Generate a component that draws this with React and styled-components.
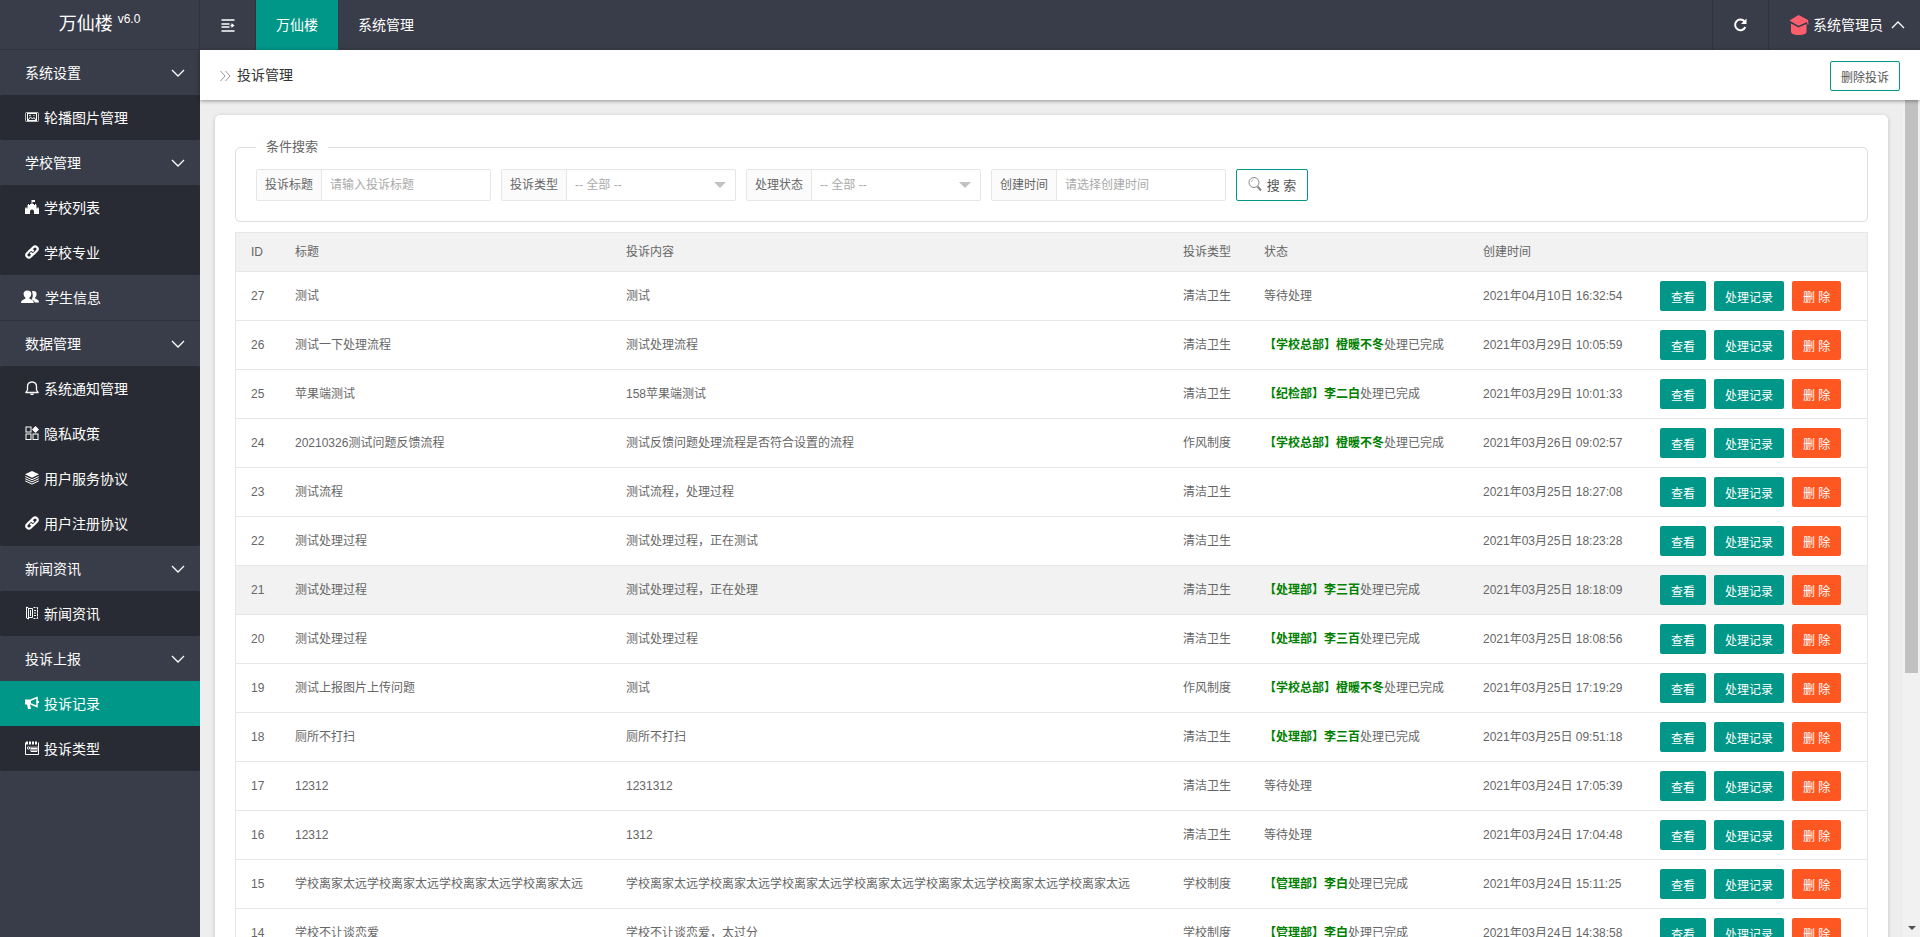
import React from 'react'
import styled, { createGlobalStyle, css } from 'styled-components'

const menu = [
  { label: '系统设置', children: [{ label: '轮播图片管理', icon: 'picture' }] },
  {
    label: '学校管理',
    children: [
      { label: '学校列表', icon: 'castle' },
      { label: '学校专业', icon: 'link' },
    ],
  },
  { label: '学生信息', icon: 'users' },
  {
    label: '数据管理',
    children: [
      { label: '系统通知管理', icon: 'bell' },
      { label: '隐私政策', icon: 'apps' },
      { label: '用户服务协议', icon: 'layers' },
      { label: '用户注册协议', icon: 'link' },
    ],
  },
  { label: '新闻资讯', children: [{ label: '新闻资讯', icon: 'news' }] },
  {
    label: '投诉上报',
    children: [
      { label: '投诉记录', icon: 'horn', active: true },
      { label: '投诉类型', icon: 'calendar' },
    ],
  },
]

const far = '学校离家太远'

const rows = [
  { id: 27, title: '测试', content: '测试', type: '清洁卫生', status: '等待处理', time: '2021年04月10日 16:32:54' },
  { id: 26, title: '测试一下处理流程', content: '测试处理流程', type: '清洁卫生', who: '【学校总部】橙暖不冬', status: '处理已完成', time: '2021年03月29日 10:05:59' },
  { id: 25, title: '苹果端测试', content: '158苹果端测试', type: '清洁卫生', who: '【纪检部】李二白', status: '处理已完成', time: '2021年03月29日 10:01:33' },
  { id: 24, title: '20210326测试问题反馈流程', content: '测试反馈问题处理流程是否符合设置的流程', type: '作风制度', who: '【学校总部】橙暖不冬', status: '处理已完成', time: '2021年03月26日 09:02:57' },
  { id: 23, title: '测试流程', content: '测试流程，处理过程', type: '清洁卫生', time: '2021年03月25日 18:27:08' },
  { id: 22, title: '测试处理过程', content: '测试处理过程，正在测试', type: '清洁卫生', time: '2021年03月25日 18:23:28' },
  { id: 21, title: '测试处理过程', content: '测试处理过程，正在处理', type: '清洁卫生', who: '【处理部】李三百', status: '处理已完成', time: '2021年03月25日 18:18:09', hover: true },
  { id: 20, title: '测试处理过程', content: '测试处理过程', type: '清洁卫生', who: '【处理部】李三百', status: '处理已完成', time: '2021年03月25日 18:08:56' },
  { id: 19, title: '测试上报图片上传问题', content: '测试', type: '作风制度', who: '【学校总部】橙暖不冬', status: '处理已完成', time: '2021年03月25日 17:19:29' },
  { id: 18, title: '厕所不打扫', content: '厕所不打扫', type: '清洁卫生', who: '【处理部】李三百', status: '处理已完成', time: '2021年03月25日 09:51:18' },
  { id: 17, title: '12312', content: '1231312', type: '清洁卫生', status: '等待处理', time: '2021年03月24日 17:05:39' },
  { id: 16, title: '12312', content: '1312', type: '清洁卫生', status: '等待处理', time: '2021年03月24日 17:04:48' },
  { id: 15, title: far.repeat(4), content: far.repeat(7), type: '学校制度', who: '【管理部】李白', status: '处理已完成', time: '2021年03月24日 15:11:25' },
  { id: 14, title: '学校不让谈恋爱', content: '学校不让谈恋爱，太过分', type: '学校制度', who: '【管理部】李白', status: '处理已完成', time: '2021年03月24日 14:38:58' },
]

const icons = {
  picture: (
    <g fill="none" stroke="currentColor">
      <rect x="0.5" y="2.5" width="13" height="9" rx="1" opacity="0.7" />
      <rect x="2.5" y="3.5" width="9" height="7" />
      <path d="M3 10l2.5-3 2 2 1.5-1.5 2 2.5" />
      <circle cx="5" cy="5.5" r="0.5" />
      <path d="M8.5 5.5h1" />
    </g>
  ),
  castle: (
    <path
      fill="currentColor"
      d="M6.500 0H10v2H7.500v2H9v1h1V4h1v1h.5v3.500H12v-1h.7v1h.6v-1h.7V14H9v-2.500a2 2 0 0 0-4 0V14H0V7.500h.7v1h.6v-1H2v1h.5V5H3V4h1v1h1V4h1.500z"
    />
  ),
  link: (
    <g fill="none" stroke="currentColor" strokeWidth="2.200" strokeLinecap="round">
      <path d="M6.200 4.300L8.300 2.200a2.500 2.500 0 0 1 3.600 3.600L9.500 8.200a2.500 2.500 0 0 1-3.500 0" />
      <path d="M7.800 9.700L5.700 11.800a2.500 2.500 0 0 1-3.600-3.600L4.500 5.800a2.500 2.500 0 0 1 3.500 0" />
    </g>
  ),
  users: (
    <g fill="currentColor">
      <path d="M9.500 1c2 0 2.600 1.200 2.600 2.900S11.500 6.800 11 7.400v1c1 .8 3 1.200 3 4.100h-3.200c-.3-1.700-1.600-2.500-2.600-3C9 8.500 9.400 6 9 3.500 8.800 2.300 8.500 1.300 8.500 1.200z" />
      <path d="M5 .5c2 0 3 1.300 3 3.200S7.200 6.900 6.600 7.500v1.300c1.200.8 3.400 1.200 3.400 4.200H0C0 10 2.200 9.600 3.400 8.800V7.500C2.800 6.900 2 5.600 2 3.700S3 .5 5 .5z" />
    </g>
  ),
  bell: (
    <g fill="none" stroke="currentColor" strokeWidth="1.300" strokeLinejoin="round">
      <path d="M7 1C4 1 2.500 3 2.500 5.500V9L.8 11.500h12.400L11.500 9V5.500C11.500 3 10 1 7 1z" />
      <path d="M5.500 12.500c.5 1.300 2.500 1.300 3 0" />
    </g>
  ),
  apps: (
    <g fill="none" stroke="currentColor">
      <rect x="1" y="1" width="5" height="5" />
      <rect x="1" y="8" width="5" height="5.500" />
      <rect x="8" y="8" width="5" height="5.500" />
      <path d="M10.500 0l3.500 3.500L10.500 7 7 3.500z" fill="currentColor" stroke="none" />
    </g>
  ),
  layers: (
    <g fill="none" stroke="currentColor">
      <path d="M7 0l7 3.300-7 3.400-7-3.400z" fill="currentColor" stroke="none" />
      <path d="M.2 5.500L7 8.700l6.800-3.200M.2 7.700L7 10.900l6.800-3.200M.2 9.900L7 13.100l6.800-3.200" />
    </g>
  ),
  news: (
    <g fill="none" stroke="currentColor">
      <path d="M1.500 1v11l2 1V2zM3.500 2.500h4v9h-4M5.500 4v6" />
      <path d="M8.500 1.500h4M9 4.500h4M9 7h4M9 9.500h4M8.500 12.500h4" strokeDasharray="2 1" />
      <path d="M12.500 1.500v11" strokeDasharray="2 1" />
    </g>
  ),
  horn: (
    <g fill="none" stroke="currentColor">
      <path d="M0 3.500h6v5H5l1 4.500H3L2 8.500H0z" fill="currentColor" stroke="none" />
      <path d="M6 4l6-2.500v9L6 8" strokeWidth="1.500" />
      <path d="M13 5v2" strokeWidth="2" />
    </g>
  ),
  calendar: (
    <g fill="none" stroke="currentColor">
      <path d="M.5 1.500v12h13v-12" />
      <path d="M1 2h12" strokeWidth="3" strokeDasharray="2 1" />
      <path d="M5 5.500h8v5H5z" fill="currentColor" fillOpacity="0.5" stroke="none" />
      <circle cx="3.500" cy="7" r="1.200" />
      <path d="M6 7.500h6M6 10.500h6" />
    </g>
  ),
}

function Chevron({ up }) {
  return (
    <svg width="14" height="14" viewBox="0 0 14 14" fill="none" stroke="currentColor" strokeWidth="1.3">
      <path d={up ? 'M1 10l6-6 6 6' : 'M1 5l6 6 6-6'} />
    </svg>
  )
}

function MenuIcon({ name }) {
  const size = name === 'users' ? 18 : 14
  return (
    <svg width={size} height="14" viewBox="0 0 14 14" preserveAspectRatio="none" aria-hidden="true">
      {icons[name]}
    </svg>
  )
}

function Sidebar() {
  return (
    <Side>
      <Logo href="#">
        万仙楼<sup>v6.0</sup>
      </Logo>
      <nav>
        {menu.map((group) => (
          <div key={group.label}>
            {group.children ? (
              <MenuLink href="#">
                <span>{group.label}</span>
                <Chevron />
              </MenuLink>
            ) : (
              <SingleLink href="#">
                <MenuIcon name={group.icon} />
                {group.label}
              </SingleLink>
            )}
            {group.children && (
              <SubMenu>
                {group.children.map((item) => (
                  <SubLink href="#" key={item.label} $active={item.active}>
                    <MenuIcon name={item.icon} />
                    {item.label}
                  </SubLink>
                ))}
              </SubMenu>
            )}
          </div>
        ))}
      </nav>
    </Side>
  )
}

function TopBar() {
  return (
    <Top>
      <ToggleButton aria-label="menu">
        <svg width="14" height="14" viewBox="0 0 14 14" fill="none" stroke="currentColor" strokeWidth="1.5">
          <path d="M0.500 2h13M0.500 6h8M0.500 9h8M0.500 13h13" />
          <path d="M9.500 7.500h2" />
          <path d="M10.500 5L13.500 7.500l-3 2.500z" fill="currentColor" stroke="none" />
        </svg>
      </ToggleButton>
      <TopLink href="#" $active>万仙楼</TopLink>
      <TopLink href="#">系统管理</TopLink>
      <Spacer />
      <RefreshButton aria-label="refresh">
        <svg width="14" height="14" viewBox="0 0 14 14" fill="none" stroke="currentColor" strokeWidth="2">
          <path d="M11.500 3.500A5.300 5.300 0 1 0 12.300 9" />
          <path d="M13.500 0.500v5.500H8z" fill="currentColor" stroke="none" />
        </svg>
      </RefreshButton>
      <UserLink href="#">
        <svg width="20" height="20" viewBox="0 0 20 20" fill="#ff5f6d">
          <path d="M9.500 0L19 5l.5 4.500h-1L18 7l-8.500 3.700L.5 5.500z" />
          <path d="M2 8.500l7.500 4 8-3.500v7.500c0 2.500-3 3.500-7.700 3.500S2 19 2 16.500z" />
        </svg>
        <span>系统管理员</span>
        <Chevron up />
      </UserLink>
    </Top>
  )
}

function SearchForm() {
  return (
    <Fieldset>
      <legend>条件搜索</legend>
      <Form onSubmit={(e) => e.preventDefault()}>
        <Field>
          <label htmlFor="title">投诉标题</label>
          <input id="title" placeholder="请输入投诉标题" />
        </Field>
        <Field>
          <label htmlFor="type">投诉类型</label>
          <SelectBox>
            <select id="type">
              <option>-- 全部 --</option>
            </select>
          </SelectBox>
        </Field>
        <Field>
          <label htmlFor="status">处理状态</label>
          <SelectBox>
            <select id="status">
              <option>-- 全部 --</option>
            </select>
          </SelectBox>
        </Field>
        <Field>
          <label htmlFor="time">创建时间</label>
          <input id="time" placeholder="请选择创建时间" />
        </Field>
        <SearchButton>
          <svg width="14" height="16" viewBox="0 0 14 16" fill="none" stroke="#888">
            <circle cx="6" cy="6.500" r="5" />
            <path d="M3.500 6a2.500 2.500 0 0 1 2-2.200" opacity="0.6" />
            <path d="M9.500 10.500l3.500 4" strokeWidth="2" />
          </svg>
          搜 索
        </SearchButton>
      </Form>
    </Fieldset>
  )
}

function ComplaintTable() {
  return (
    <Table>
      <colgroup>
        <Col $w={44} />
        <Col $w={331} />
        <Col />
        <Col $w={81} />
        <Col $w={219} />
        <Col $w={177} />
        <Col $w={222} />
      </colgroup>
      <thead>
        <tr>
          <th>ID</th>
          <th>标题</th>
          <th>投诉内容</th>
          <th>投诉类型</th>
          <th>状态</th>
          <th>创建时间</th>
          <th></th>
        </tr>
      </thead>
      <tbody>
        {rows.map((row) => (
          <Row key={row.id} $hover={row.hover}>
            <td>{row.id}</td>
            <td>{row.title}</td>
            <td>{row.content}</td>
            <td>{row.type}</td>
            <td>
              {row.who && <Handler>{row.who}</Handler>}
              {row.status}
            </td>
            <td>{row.time}</td>
            <td>
              <Actions>
                <ActionButton>查看</ActionButton>
                <ActionButton>处理记录</ActionButton>
                <ActionButton $danger>删 除</ActionButton>
              </Actions>
            </td>
          </Row>
        ))}
      </tbody>
    </Table>
  )
}

function App() {
  return (
    <Page>
      <GlobalStyle />
      <Sidebar />
      <Main>
        <TopBar />
        <PageHeader>
          <svg width="11" height="12" viewBox="0 0 11 12" fill="none" stroke="#999">
            <path d="M0.500 1l4.500 5-4.500 5M5.500 1l4.500 5-4.500 5" />
          </svg>
          <h1>投诉管理</h1>
          <Spacer />
          <OutlineButton>删除投诉</OutlineButton>
        </PageHeader>
        <Body>
          <Content>
            <Card>
              <SearchForm />
              <ComplaintTable />
            </Card>
          </Content>
          <ScrollTrack>
            <ScrollThumb />
            <ScrollArrow />
          </ScrollTrack>
        </Body>
      </Main>
    </Page>
  )
}

export default App

const GlobalStyle = createGlobalStyle`
*{
    box-sizing: border-box;
}
body{
    margin: 0;
    overflow: hidden;
    font-size: 12px;
    color: #666;
}
body, button, input, select{
    font-family: "Liberation Sans", "Noto Sans CJK SC", sans-serif;
}
a{
    text-decoration: none;
    color: #fff;
}
button{
    cursor: pointer;
    padding: 0;
    border: none;
}
`;

const Page = styled.div`
display: flex;
height: 100vh;
`;

const Side = styled.aside`
width: 200px;
flex-shrink: 0;
background-color: #393D49;
font-size: 14px;
`;

const Logo = styled.a`
display: flex;
justify-content: center;
height: 50px;
line-height: 49px;
font-size: 18px;
border-right: 1px solid #30333d;
border-bottom: 1px solid #30333d;
sup{
    font-size: 12px;
    line-height: 39px;
    margin-left: 5px;
}
`;

const itemStyle = css`
display: flex;
align-items: center;
height: 45px;
padding: 0 15px 2px 25px;
svg{
    flex-shrink: 0;
}
`;

const MenuLink = styled.a`
${itemStyle}
justify-content: space-between;
`;

const SingleLink = styled.a`
${itemStyle}
height: 46px;
padding-left: 21px;
gap: 6px;
border-bottom: 1px solid #30333d;
`;

const SubMenu = styled.div`
background-color: #282B33;
border-radius: 2px;
`;

const SubLink = styled.a`
${itemStyle}
gap: 5px;
background-color: ${(props) => (props.$active ? '#009688' : 'transparent')};
`;

const Main = styled.main`
flex: 1;
min-width: 0;
display: flex;
flex-direction: column;
`;

const Top = styled.header`
display: flex;
flex-shrink: 0;
height: 50px;
background-color: #393D49;
color: #fff;
font-size: 14px;
`;

const ToggleButton = styled.button`
width: 56px;
display: flex;
align-items: center;
justify-content: center;
background: none;
color: #fff;
border-right: 1px solid #30333d;
`;

const TopLink = styled.a`
padding: 0 20px;
line-height: 50px;
background-color: ${(props) => (props.$active ? '#009688' : 'transparent')};
`;

const Spacer = styled.div`
flex: 1;
`;

const RefreshButton = styled(ToggleButton)`
border-left: 1px solid #30333d;
width: 57px;
padding-right: 1px;
`;

const UserLink = styled.a`
display: flex;
align-items: center;
padding: 0 15px 0 20px;
span{
    margin: 0 8px 0 4px;
    padding-bottom: 2px;
}
`;

const PageHeader = styled.div`
position: relative;
z-index: 1;
display: flex;
align-items: center;
flex-shrink: 0;
height: 50px;
padding: 2px 20px 0;
background-color: #fff;
box-shadow: 0 1px 4px rgba(0, 0, 0, 0.4);
h1{
    margin: 0 0 0 6px;
    padding-bottom: 4px;
    font-size: 14px;
    font-weight: 400;
    color: #333;
}
`;

const OutlineButton = styled.button`
width: 70px;
height: 30px;
font-size: 12px;
color: #555;
background-color: #fff;
border: 1px solid #009688;
border-radius: 2px;
`;

const Body = styled.div`
flex: 1;
min-height: 0;
display: flex;
background-color: #eee;
`;

const Content = styled.div`
flex: 1;
min-width: 0;
padding: 15px;
overflow: hidden;
`;

const Card = styled.section`
padding: 20px;
background-color: #fff;
border-radius: 5px;
box-shadow: 0 1px 4px rgba(0, 0, 0, 0.2);
`;

const Fieldset = styled.fieldset`
margin: 0 0 10px;
padding: 10px 20px 20px;
border: 1px solid #ddd;
border-radius: 5px;
legend{
    padding: 0 10px;
    font-size: 13px;
    line-height: 24px;
}
`;

const Form = styled.form`
display: flex;
gap: 10px;
`;

const Field = styled.div`
display: flex;
width: 235px;
height: 32px;
border: 1px solid #e6e6e6;
border-radius: 2px;
label{
    flex-shrink: 0;
    padding: 0 8px;
    line-height: 31px;
    background-color: #fbfbfb;
    border-right: 1px solid #e6e6e6;
}
input, select{
    flex: 1;
    min-width: 0;
    width: 100%;
    height: 100%;
    padding: 0 8px;
    font-size: 12px;
    border: none;
    outline: none;
    background: none;
    appearance: none;
}
select, input::placeholder{
    color: #aaa;
}
`;

const SelectBox = styled.div`
flex: 1;
position: relative;
&::after {
    content: '';
    position: absolute;
    right: 9px;
    top: 12px;
    border: 6px solid transparent;
    border-top-color: #c2c2c2;
    pointer-events: none;
}
`;

const SearchButton = styled(OutlineButton)`
display: flex;
align-items: center;
justify-content: center;
gap: 5px;
width: 72px;
height: 32px;
padding-bottom: 2px;
font-size: 13px;
`;

const Table = styled.table`
width: 100%;
table-layout: fixed;
border-collapse: separate;
border-spacing: 0;
border: 1px solid #e6e6e6;
line-height: 18px;
th, td{
    padding: 0 15px;
    text-align: left;
    font-weight: 400;
    white-space: nowrap;
    border-bottom: 1px solid #e6e6e6;
}
th{
    height: 39px;
    background-color: #f2f2f2;
}
`;

const Col = styled.col`
width: ${(props) => (props.$w ? `${props.$w}px` : 'auto')};
`;

const Row = styled.tr`
height: 49px;
background-color: ${(props) => (props.$hover ? '#f2f2f2' : '#fff')};
`;

const Handler = styled.b`
color: green;
`;

const Actions = styled.div`
display: flex;
gap: 8px;
`;

const ActionButton = styled.button`
height: 30px;
padding: 0 11px;
font-size: 12px;
color: #fff;
border-radius: 2px;
background-color: ${(props) => (props.$danger ? '#FF5722' : '#009688')};
`;

const ScrollTrack = styled.div`
display: flex;
flex-direction: column;
align-items: center;
justify-content: space-between;
width: 17px;
padding-bottom: 7px;
background-color: #f1f1f1;
`;

const ScrollThumb = styled.div`
width: 13px;
height: 69%;
background-color: #c1c1c1;
`;

const ScrollArrow = styled.div`
border: 4px solid transparent;
border-top-color: #505050;
border-bottom: none;
`;
